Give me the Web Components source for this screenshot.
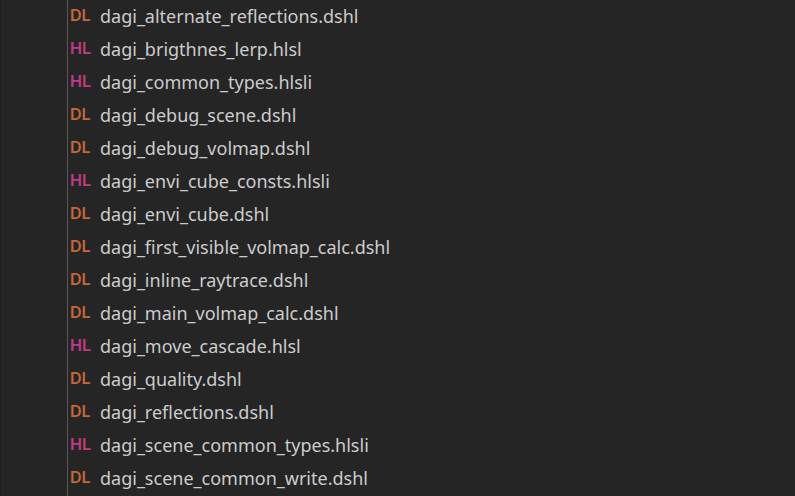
<!DOCTYPE html>
<html lang="en">
<head>
<meta charset="utf-8">
<title>Explorer</title>
<style>
  html, body { margin: 0; min-height: 100%; background: #252526; }
  body { font-family: "Noto Sans", "Open Sans", sans-serif; color: #cccccc; }
</style>
</head>
<body>
<file-tree>
  <file-row kind="DL">dagi_alternate_reflections.dshl</file-row>
  <file-row kind="HL">dagi_brigthnes_lerp.hlsl</file-row>
  <file-row kind="HL">dagi_common_types.hlsli</file-row>
  <file-row kind="DL">dagi_debug_scene.dshl</file-row>
  <file-row kind="DL">dagi_debug_volmap.dshl</file-row>
  <file-row kind="HL">dagi_envi_cube_consts.hlsli</file-row>
  <file-row kind="DL">dagi_envi_cube.dshl</file-row>
  <file-row kind="DL">dagi_first_visible_volmap_calc.dshl</file-row>
  <file-row kind="DL">dagi_inline_raytrace.dshl</file-row>
  <file-row kind="DL">dagi_main_volmap_calc.dshl</file-row>
  <file-row kind="HL">dagi_move_cascade.hlsl</file-row>
  <file-row kind="DL">dagi_quality.dshl</file-row>
  <file-row kind="DL">dagi_reflections.dshl</file-row>
  <file-row kind="HL">dagi_scene_common_types.hlsli</file-row>
  <file-row kind="DL">dagi_scene_common_write.dshl</file-row>
</file-tree>
<script>
class FileTree extends HTMLElement {
  constructor() {
    super();
    this.attachShadow({ mode: "open" }).innerHTML = `
      <style>
        :host { display: block; box-sizing: border-box; border-left: 1px solid #1f1f20; padding-left: 66px; background: #252526; }
        .guide { min-height: 100vh; border-left: 1px solid #585858; }
      </style>
      <div class="guide" role="tree"><slot></slot></div>`;
  }
}
class FileRow extends HTMLElement {
  constructor() {
    super();
    this.attachShadow({ mode: "open" }).innerHTML = `
      <style>
        :host { display: flex; align-items: center; height: 33px; padding-left: 2px; font-size: 18px; line-height: 33px; white-space: nowrap; cursor: pointer; }
        .kind { width: 30px; flex: none; font-family: Inter, sans-serif; font-size: 16px; font-weight: 600; line-height: 31px; align-self: flex-start; color: #c4683a; }
        :host([kind="HL"]) .kind { color: #c13b83; }
      </style>
      <span class="kind"></span><span class="name"><slot></slot></span>`;
  }
  connectedCallback() {
    this.setAttribute("role", "treeitem");
    this.shadowRoot.querySelector(".kind").textContent = this.getAttribute("kind");
  }
}
customElements.define("file-tree", FileTree);
customElements.define("file-row", FileRow);
</script>
</body>
</html>
